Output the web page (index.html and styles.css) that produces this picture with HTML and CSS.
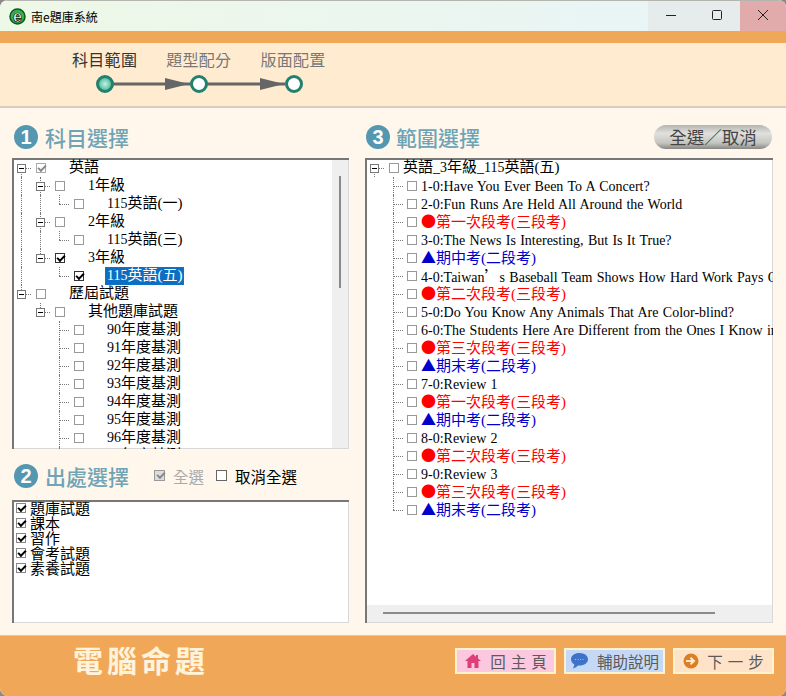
FILE: index.html
```html
<!DOCTYPE html>
<html lang="zh-Hant">

<head>
    <meta charset="UTF-8">
    <meta name="viewport" content="width=device-width, initial-scale=1.0">
    <title>南e題庫系統</title>
    <link rel="stylesheet" href="styles.css">
</head>

<body>
    <div class="window">
        <!-- title bar -->
        <div class="titlebar">
            <svg class="app-icon" width="17" height="17" viewBox="0 0 17 17">
                <circle cx="8.5" cy="8.5" r="7.5" fill="#35b04a" stroke="#0c5a1c" stroke-width="1.500" />
                <text x="8.500" y="13.500" text-anchor="middle" font-family="Liberation Sans" font-size="16" font-weight="bold" fill="#fff" stroke="#111" stroke-width=".7">e</text>
            </svg>
            <span class="app-name">南e題庫系統</span>
            <div class="win-btns">
                <span class="win-btn"><svg width="12" height="12" viewBox="0 0 12 12"><path d="M1 6.500h10" stroke="#222" stroke-width="1" /></svg></span>
                <span class="win-btn"><svg width="12" height="12" viewBox="0 0 12 12"><rect x="1.500" y="1.500" width="9" height="9" rx="1" fill="none" stroke="#222" /></svg></span>
                <span class="win-btn close"><svg width="12" height="12" viewBox="0 0 12 12"><path d="M1 1l10 10M11 1L1 11" stroke="#222" stroke-width="1" /></svg></span>
            </div>
        </div>
        <div class="orange-bar"></div>

        <!-- steps -->
        <div class="stepper">
            <div class="step-labels">
                <span class="step-label active">科目範圍</span>
                <span class="step-label">題型配分</span>
                <span class="step-label">版面配置</span>
            </div>
            <svg class="step-track" width="216" height="20" viewBox="0 0 216 20">
                <defs>
                    <radialGradient id="stepOn">
                        <stop offset="0" stop-color="#c4f2e2" />
                        <stop offset="1" stop-color="#3fb295" />
                    </radialGradient>
                </defs>
                <path d="M10 10h180" stroke="#666" stroke-width="3" />
                <path d="M70 4l24 6-24 6zM165 4l24 6-24 6z" fill="#666" />
                <circle cx="10" cy="10" r="7.500" fill="url(#stepOn)" stroke="#22806c" stroke-width="3" />
                <circle cx="104" cy="10" r="7.500" fill="#fff" stroke="#22806c" stroke-width="3" />
                <circle cx="199" cy="10" r="7.500" fill="#fff" stroke="#22806c" stroke-width="3" />
            </svg>
        </div>

        <div class="main">
            <!-- left column -->
            <div class="col col-left">
                <div class="heading">
                    <span class="num">1</span>
                    <h2>科目選擇</h2>
                </div>
                <div class="tree tree-subject">
                    <div class="rows">
                        <div class="row"><span class="c down"><i class="box"></i></span><span class="c"><i class="chk on gray"></i></span><span class="c"></span><span class="t">英語</span></div>
                        <div class="row"><span class="c line"></span><span class="c tee"><i class="box"></i></span><span class="c"><i class="chk"></i></span><span class="c"></span><span class="t"><span class="n">1</span>年級</span></div>
                        <div class="row"><span class="c line"></span><span class="c line"></span><span class="c elbow"></span><span class="c"><i class="chk"></i></span><span class="c"></span><span class="t"><span class="n">115</span>英語(一)</span></div>
                        <div class="row"><span class="c line"></span><span class="c tee"><i class="box"></i></span><span class="c"><i class="chk"></i></span><span class="c"></span><span class="t"><span class="n">2</span>年級</span></div>
                        <div class="row"><span class="c line"></span><span class="c line"></span><span class="c elbow"></span><span class="c"><i class="chk"></i></span><span class="c"></span><span class="t"><span class="n">115</span>英語(三)</span></div>
                        <div class="row"><span class="c line"></span><span class="c elbow"><i class="box"></i></span><span class="c"><i class="chk on"></i></span><span class="c"></span><span class="t"><span class="n">3</span>年級</span></div>
                        <div class="row"><span class="c line"></span><span class="c"></span><span class="c elbow"></span><span class="c"><i class="chk on"></i></span><span class="c"></span><span class="t selected"><span class="n">115</span>英語(五)</span></div>
                        <div class="row"><span class="c elbow"><i class="box"></i></span><span class="c"><i class="chk"></i></span><span class="c"></span><span class="t">歷屆試題</span></div>
                        <div class="row"><span class="c"></span><span class="c elbow"><i class="box"></i></span><span class="c"><i class="chk"></i></span><span class="c"></span><span class="t">其他題庫試題</span></div>
                        <div class="row"><span class="c"></span><span class="c"></span><span class="c tee"></span><span class="c"><i class="chk"></i></span><span class="c"></span><span class="t"><span class="n">90</span>年度基測</span></div>
                        <div class="row"><span class="c"></span><span class="c"></span><span class="c tee"></span><span class="c"><i class="chk"></i></span><span class="c"></span><span class="t"><span class="n">91</span>年度基測</span></div>
                        <div class="row"><span class="c"></span><span class="c"></span><span class="c tee"></span><span class="c"><i class="chk"></i></span><span class="c"></span><span class="t"><span class="n">92</span>年度基測</span></div>
                        <div class="row"><span class="c"></span><span class="c"></span><span class="c tee"></span><span class="c"><i class="chk"></i></span><span class="c"></span><span class="t"><span class="n">93</span>年度基測</span></div>
                        <div class="row"><span class="c"></span><span class="c"></span><span class="c tee"></span><span class="c"><i class="chk"></i></span><span class="c"></span><span class="t"><span class="n">94</span>年度基測</span></div>
                        <div class="row"><span class="c"></span><span class="c"></span><span class="c tee"></span><span class="c"><i class="chk"></i></span><span class="c"></span><span class="t"><span class="n">95</span>年度基測</span></div>
                        <div class="row"><span class="c"></span><span class="c"></span><span class="c tee"></span><span class="c"><i class="chk"></i></span><span class="c"></span><span class="t"><span class="n">96</span>年度基測</span></div>
                        <div class="row"><span class="c"></span><span class="c"></span><span class="c tee"></span><span class="c"><i class="chk"></i></span><span class="c"></span><span class="t"><span class="n">97</span>年度基測</span></div>
                    </div>
                    <div class="vscroll"><span class="vthumb"></span></div>
                </div>

                <div class="heading heading-source">
                    <span class="num">2</span>
                    <h2>出處選擇</h2>
                    <label class="opt opt-all"><i class="opt-box on"></i>全選</label>
                    <label class="opt opt-none"><i class="opt-box"></i>取消全選</label>
                </div>
                <div class="source-list">
                    <div class="source"><i class="source-box"></i>題庫試題</div>
                    <div class="source"><i class="source-box"></i>課本</div>
                    <div class="source"><i class="source-box"></i>習作</div>
                    <div class="source"><i class="source-box"></i>會考試題</div>
                    <div class="source"><i class="source-box"></i>素養試題</div>
                </div>
            </div>

            <!-- right column -->
            <div class="col col-right">
                <div class="heading">
                    <span class="num">3</span>
                    <h2>範圍選擇</h2>
                    <button class="pill">全選／取消</button>
                </div>
                <div class="tree tree-range">
                    <div class="rows">
                        <div class="row"><span class="c down"><i class="box"></i></span><span class="c"><i class="chk"></i></span><span class="t">英語<span class="n">_3</span>年級<span class="n">_115</span>英語(五)</span></div>
                        <div class="row"><span class="c"></span><span class="c tee"></span><span class="c c-chk"><i class="chk"></i></span><span class="t en">1-0:Have You Ever Been To A Concert?</span></div>
                        <div class="row"><span class="c"></span><span class="c tee"></span><span class="c c-chk"><i class="chk"></i></span><span class="t en">2-0:Fun Runs Are Held All Around the World</span></div>
                        <div class="row"><span class="c"></span><span class="c tee"></span><span class="c c-chk"><i class="chk"></i></span><span class="t red"><span class="mark">●</span>第一次段考(三段考)</span></div>
                        <div class="row"><span class="c"></span><span class="c tee"></span><span class="c c-chk"><i class="chk"></i></span><span class="t en">3-0:The News Is Interesting, But Is It True?</span></div>
                        <div class="row"><span class="c"></span><span class="c tee"></span><span class="c c-chk"><i class="chk"></i></span><span class="t blue"><span class="mark">▲</span>期中考(二段考)</span></div>
                        <div class="row"><span class="c"></span><span class="c tee"></span><span class="c c-chk"><i class="chk"></i></span><span class="t en">4-0:Taiwan<span class="quote">’</span>s Baseball Team Shows How Hard Work Pays Off</span></div>
                        <div class="row"><span class="c"></span><span class="c tee"></span><span class="c c-chk"><i class="chk"></i></span><span class="t red"><span class="mark">●</span>第二次段考(三段考)</span></div>
                        <div class="row"><span class="c"></span><span class="c tee"></span><span class="c c-chk"><i class="chk"></i></span><span class="t en">5-0:Do You Know Any Animals That Are Color-blind?</span></div>
                        <div class="row"><span class="c"></span><span class="c tee"></span><span class="c c-chk"><i class="chk"></i></span><span class="t en">6-0:The Students Here Are Different from the Ones I Know in</span></div>
                        <div class="row"><span class="c"></span><span class="c tee"></span><span class="c c-chk"><i class="chk"></i></span><span class="t red"><span class="mark">●</span>第三次段考(三段考)</span></div>
                        <div class="row"><span class="c"></span><span class="c tee"></span><span class="c c-chk"><i class="chk"></i></span><span class="t blue"><span class="mark">▲</span>期末考(二段考)</span></div>
                        <div class="row"><span class="c"></span><span class="c tee"></span><span class="c c-chk"><i class="chk"></i></span><span class="t en">7-0:Review 1</span></div>
                        <div class="row"><span class="c"></span><span class="c tee"></span><span class="c c-chk"><i class="chk"></i></span><span class="t red"><span class="mark">●</span>第一次段考(三段考)</span></div>
                        <div class="row"><span class="c"></span><span class="c tee"></span><span class="c c-chk"><i class="chk"></i></span><span class="t blue"><span class="mark">▲</span>期中考(二段考)</span></div>
                        <div class="row"><span class="c"></span><span class="c tee"></span><span class="c c-chk"><i class="chk"></i></span><span class="t en">8-0:Review 2</span></div>
                        <div class="row"><span class="c"></span><span class="c tee"></span><span class="c c-chk"><i class="chk"></i></span><span class="t red"><span class="mark">●</span>第二次段考(三段考)</span></div>
                        <div class="row"><span class="c"></span><span class="c tee"></span><span class="c c-chk"><i class="chk"></i></span><span class="t en">9-0:Review 3</span></div>
                        <div class="row"><span class="c"></span><span class="c tee"></span><span class="c c-chk"><i class="chk"></i></span><span class="t red"><span class="mark">●</span>第三次段考(三段考)</span></div>
                        <div class="row"><span class="c"></span><span class="c elbow"></span><span class="c c-chk"><i class="chk"></i></span><span class="t blue"><span class="mark">▲</span>期末考(二段考)</span></div>
                    </div>
                    <div class="hscroll"><span class="hthumb"></span></div>
                </div>
            </div>
        </div>

        <!-- footer -->
        <div class="footer">
            <div class="brand">電腦命題</div>
            <div class="foot-btns">
                <button class="foot-btn btn-home">
                    <svg width="18" height="16" viewBox="0 0 18 16"><path d="M9 1L1 8h2.500v7h4v-5h3v5h4V8H17l-3-2.600V2h-2v1.700z" fill="#dd3f78" /></svg>
                    <span class="spaced">回主頁</span>
                </button>
                <button class="foot-btn btn-help">
                    <svg width="19" height="18" viewBox="0 0 19 18"><path d="M9.500 1C4.500 1 1 3.700 1 7.300c0 2.200 1.300 4 3.400 5.100-.2 1.500-.9 3-1.900 4.100 2.300-.4 4.200-1.500 5.500-3 .5.100 1 .1 1.500.1 5 0 8.500-2.800 8.500-6.300S14.500 1 9.500 1z" fill="#3f73c9" /><path d="M5 7.500h9" stroke="#9cc0ee" stroke-dasharray="1 1.500" /></svg>
                    <span>輔助說明</span>
                </button>
                <button class="foot-btn btn-next">
                    <svg width="16" height="16" viewBox="0 0 16 16"><circle cx="8" cy="8" r="7.500" fill="#dc7f24" /><path d="M3 8h7M7.500 4.800L11 8l-3.500 3.200" fill="none" stroke="#ffe9d2" stroke-width="2" /></svg>
                    <span class="spaced">下一步</span>
                </button>
            </div>
        </div>
    </div>
</body>

</html>
```

FILE: styles.css
```css
* {
    box-sizing: border-box;
    margin: 0;
    padding: 0;
}
body {
    background-color: #8a8a86;
    font-family: "Liberation Serif", "Noto Sans CJK TC", serif;
    font-size: 15px;
    color: #000;
}
.window {
    width: 786px;
    height: 696px;
    display: flex;
    flex-direction: column;
    border-radius: 8px;
    overflow: hidden;
    background-color: #fff7ec;
}

/* title bar */
.titlebar {
    height: 31px;
    flex: none;
    display: flex;
    align-items: center;
    padding-left: 9px;
    background: linear-gradient(90deg, #eef8e6, #e8f4f9);
    border-top: 1px solid #b5b5b0;
}
.app-name {
    font-family: "Noto Sans CJK TC", sans-serif;
    font-size: 12px;
    margin-left: 5px;
}
.win-btns {
    margin-left: auto;
    display: flex;
    height: 100%;
}
.win-btn {
    width: 46px;
    padding-bottom: 2px;
    display: flex;
    align-items: center;
    justify-content: center;
    background-color: #e6ebec;
}
.win-btn.close {
    background-color: #e0abaa;
}
.orange-bar {
    height: 12px;
    flex: none;
    background-color: #f0a858;
}

/* steps */
.stepper {
    height: 65px;
    flex: none;
    padding: 6px 0 0 72px;
    background-color: #ffebcf;
    border-bottom: 2px solid #d4cdc0;
}
.step-labels {
    display: flex;
    gap: 29px;
    font-family: "Noto Sans CJK TC", sans-serif;
    font-size: 16px;
    letter-spacing: .3px;
    line-height: 20px;
    color: #777;
}
.step-label.active {
    color: #333;
}
.step-track {
    display: block;
    margin: 5px 0 0 23px;
}

/* main */
.main {
    flex: 1;
    display: flex;
    gap: 16px;
    padding: 16px 13px 12px 12px;
}
.col-left {
    width: 337px;
}
.col-right {
    width: 408px;
}
.heading {
    height: 34px;
    padding-bottom: 8px;
    display: flex;
    align-items: center;
}
.heading h2 {
    font-family: "Noto Sans CJK TC", sans-serif;
    font-size: 21px;
    font-weight: 500;
    color: #6ea4b6;
    margin-left: 7px;
}
.num {
    width: 24px;
    height: 24px;
    margin-left: 2px;
    flex: none;
    border-radius: 50%;
    background-color: #5497b1;
    color: #fff;
    font-family: "Liberation Sans", sans-serif;
    font-size: 20px;
    font-weight: bold;
    line-height: 24px;
    text-align: center;
}
.col-right .num {
    margin-left: 1px;
}
.col-right h2 {
    margin-left: 6px;
}
.heading-source {
    height: 51px;
    padding: 2px 0 0;
}
.opt {
    display: flex;
    align-items: center;
    font-family: "Noto Sans CJK TC", sans-serif;
    font-size: 15.500px;
    margin-left: 25px;
}
.opt-all {
    color: #aaa;
}
.opt-none {
    margin-left: 12px;
}
.opt-box {
    position: relative;
    width: 11px;
    height: 11px;
    margin-right: 8px;
    border: 1px solid #666;
    background-color: #fff;
}
.opt-box.on {
    background-color: #ddd;
    border-color: #999;
}
.opt-box.on::after {
    content: "";
    position: absolute;
    left: 2px;
    top: 1px;
    width: 6px;
    height: 3px;
    border-left: 2px solid #888;
    border-bottom: 2px solid #888;
    transform: rotate(-45deg);
}
.pill {
    margin-left: auto;
    margin-right: 1px;
    width: 118px;
    height: 24px;
    border: none;
    border-radius: 12px;
    background: linear-gradient(#b4b4b0, #e0e0dc 35%, #c4c4c0 75%, #858582);
    font-family: "Noto Sans CJK TC", sans-serif;
    font-size: 17.500px;
    line-height: 24px;
    color: #444;
}

/* trees */
.tree {
    position: relative;
    overflow: hidden;
    background-color: #fff;
    box-shadow: inset 2px 2px 0 #777, inset -1px -1px 0 #d8d8d8;
}
.tree-subject {
    height: 291px;
    display: flex;
}
.tree-subject .rows {
    flex: 1;
    padding-top: 1px;
}
.tree-range {
    height: 465px;
    display: flex;
    flex-direction: column;
}
.tree-range .rows {
    flex: 1;
    padding-top: 1px;
    overflow: hidden;
}
.row {
    height: 18px;
    display: flex;
    align-items: center;
    white-space: nowrap;
}
.c {
    position: relative;
    width: 19px;
    height: 18px;
    flex: none;
    display: flex;
    align-items: center;
    justify-content: center;
}
.c-chk {
    width: 18px;
}
.line::before,
.tee::before,
.elbow::before,
.down::before {
    content: "";
    position: absolute;
    left: 9px;
    top: 0;
    bottom: 0;
    border-left: 1px dotted #777;
}
.elbow::before {
    bottom: 9px;
}
.down::before {
    top: 9px;
}
.tee::after,
.elbow::after,
.down::after {
    content: "";
    position: absolute;
    left: 9px;
    top: 9px;
    width: 10px;
    border-top: 1px dotted #777;
}
.box {
    position: relative;
    z-index: 1;
    width: 9px;
    height: 9px;
    border: 1px solid #777;
    background-color: #fff;
}
.box::after {
    content: "";
    position: absolute;
    left: 1px;
    top: 3px;
    width: 5px;
    height: 1px;
    background-color: #000;
}
.chk {
    position: relative;
    width: 10px;
    height: 10px;
    border: 1px solid #999;
    background-color: #fff;
}
.chk.on {
    border-color: #333;
}
.chk.gray {
    border-color: #aaa;
}
.chk.on::after {
    content: "";
    position: absolute;
    left: 1px;
    top: 1px;
    width: 6px;
    height: 3px;
    border-left: 2px solid #000;
    border-bottom: 2px solid #000;
    transform: rotate(-45deg);
}
.chk.gray::after {
    border-color: #888;
}
.t {
    line-height: 18px;
    margin-bottom: 2px;
}
.n {
    font-size: 14px;
}
.en {
    font-size: 14px;
    word-spacing: .8px;
    margin-bottom: 0;
    padding-top: 1px;
}
.quote {
    font-family: "Noto Sans CJK TC", sans-serif;
    font-size: 15px;
}
.mark {
    display: inline-block;
    width: 15px;
    font-family: "Noto Sans CJK TC", sans-serif;
    text-align: center;
}
.red {
    color: #f00;
}
.blue {
    color: #00c;
}
.selected {
    margin: 0 0 0 -2px;
    padding: 0 2px 1px;
    line-height: 17px;
    background-color: #0a6fc2;
    color: #fff;
    outline: 1px dotted #c33;
    outline-offset: -1px;
}
.vscroll {
    width: 16px;
    flex: none;
    padding-top: 16px;
    margin: 2px 1px 1px 0;
    background-color: #efefef;
}
.vthumb {
    display: block;
    width: 2px;
    height: 112px;
    margin-left: 7px;
    background-color: #8a8a8a;
}
.hscroll {
    height: 17px;
    flex: none;
    padding: 7px 0 0 16px;
    margin: 0 1px 1px 2px;
    background-color: #efefef;
}
.hthumb {
    display: block;
    width: 332px;
    height: 2px;
    background-color: #8a8a8a;
}

/* source list */
.source-list {
    height: 123px;
    padding: 0 0 0 4px;
    background-color: #fff;
    box-shadow: inset 2px 2px 0 #777, inset -1px -1px 0 #d8d8d8;
    font-family: "Noto Sans CJK TC", sans-serif;
    font-size: 15px;
}
.source {
    height: 15px;
    display: flex;
    align-items: center;
    line-height: 15px;
}
.source-box {
    position: relative;
    width: 10px;
    height: 10px;
    margin-right: 4px;
    border: 1px solid #888;
}
.source-box::after {
    content: "";
    position: absolute;
    left: 1px;
    top: 1px;
    width: 6px;
    height: 3px;
    border-left: 2px solid #000;
    border-bottom: 2px solid #000;
    transform: rotate(-45deg);
}

/* footer */
.footer {
    height: 61px;
    flex: none;
    display: flex;
    align-items: center;
    justify-content: space-between;
    padding: 0 12px 10px 73px;
    background-color: #f0a858;
    border-top: 1px solid #dcc9a8;
}
.brand {
    font-family: "Noto Sans CJK TC", sans-serif;
    font-size: 30px;
    font-weight: bold;
    letter-spacing: 4px;
    margin-bottom: 4px;
    color: #fff3dc;
}
.foot-btns {
    display: flex;
    gap: 8px;
}
.foot-btn {
    width: 101px;
    height: 26px;
    display: flex;
    align-items: center;
    justify-content: center;
    gap: 8px;
    border: 2px solid #fff2cf;
    font-family: "Noto Sans CJK TC", sans-serif;
    font-size: 15.500px;
    color: #5b5b5b;
}
.spaced {
    letter-spacing: 5px;
    margin-right: -5px;
}
.btn-home {
    background-color: #fbc8e0;
}
.btn-help {
    background-color: #c5d9f6;
}
.btn-next {
    background-color: #ffe3c8;
}
```
